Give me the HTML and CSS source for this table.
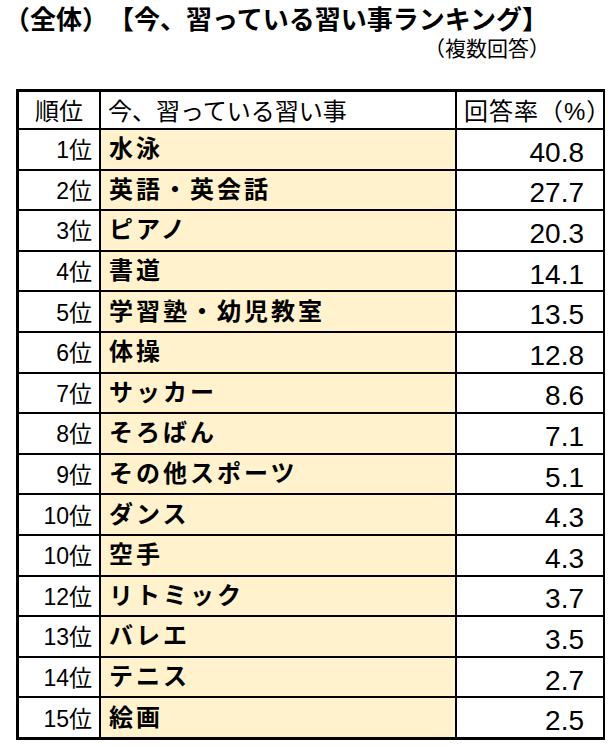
FILE: index.html
```html
<!DOCTYPE html>
<html lang="ja">
<head>
<meta charset="utf-8">
<title>今、習っている習い事ランキング</title>
<link rel="stylesheet" href="styles.css">
</head>
<body>
<div class="page">
  <h1 class="title">（全体）【今、習っている習い事ランキング】</h1>
  <div class="note">（複数回答）</div>
  <div class="table">
    <div class="hcell h-rank">順位</div>
    <div class="hcell h-name">今、習っている習い事</div>
    <div class="hcell h-rate">回答率（%）</div>

    <div class="cell rank">1位</div><div class="cell name">水泳</div><div class="cell rate">40.8</div>
    <div class="cell rank">2位</div><div class="cell name">英語・英会話</div><div class="cell rate">27.7</div>
    <div class="cell rank">3位</div><div class="cell name">ピアノ</div><div class="cell rate">20.3</div>
    <div class="cell rank">4位</div><div class="cell name">書道</div><div class="cell rate">14.1</div>
    <div class="cell rank">5位</div><div class="cell name">学習塾・幼児教室</div><div class="cell rate">13.5</div>
    <div class="cell rank">6位</div><div class="cell name">体操</div><div class="cell rate">12.8</div>
    <div class="cell rank">7位</div><div class="cell name">サッカー</div><div class="cell rate">8.6</div>
    <div class="cell rank">8位</div><div class="cell name">そろばん</div><div class="cell rate">7.1</div>
    <div class="cell rank">9位</div><div class="cell name">その他スポーツ</div><div class="cell rate">5.1</div>
    <div class="cell rank">10位</div><div class="cell name">ダンス</div><div class="cell rate">4.3</div>
    <div class="cell rank">10位</div><div class="cell name">空手</div><div class="cell rate">4.3</div>
    <div class="cell rank">12位</div><div class="cell name">リトミック</div><div class="cell rate">3.7</div>
    <div class="cell rank">13位</div><div class="cell name">バレエ</div><div class="cell rate">3.5</div>
    <div class="cell rank">14位</div><div class="cell name">テニス</div><div class="cell rate">2.7</div>
    <div class="cell rank">15位</div><div class="cell name">絵画</div><div class="cell rate">2.5</div>
  </div>
</div>
</body>
</html>
```

FILE: styles.css
```css
html, body {
  margin: 0;
  padding: 0;
  background: #ffffff;
}

body {
  font-family: "Liberation Sans", "Noto Sans CJK JP", sans-serif;
  color: #000000;
  text-spacing-trim: space-all;
}

.page {
  width: 605px;
  padding-top: 7px;
}

.title {
  margin: 0;
  padding-left: 4px;
  font-size: 26px;
  line-height: 26px;
  font-weight: bold;
  text-spacing-trim: space-all;
}

.note {
  margin-top: 5px;
  font-size: 21px;
  line-height: 21px;
  text-align: right;
  padding-right: 55px;
}

.table {
  margin: 30px 0 0 16px;
  display: grid;
  grid-template-columns: 80px 354px 146px;
  grid-template-rows: 36px repeat(15, 38.6px);
  gap: 2px;
  padding: 3px 2px 3px 3px;
  background: #000000;
  width: max-content;
}

.hcell,
.cell {
  background: #ffffff;
  display: flex;
  align-items: center;
  box-sizing: border-box;
  white-space: nowrap;
}

.hcell {
  font-size: 24px;
  line-height: 24px;
  font-weight: normal;
  padding-top: 3px;
}

.h-rank {
  justify-content: center;
}

.h-name {
  padding-left: 7px;
}

.h-rate {
  padding-left: 7px;
  letter-spacing: 1px;
}

.rank {
  justify-content: flex-end;
  padding-right: 7px;
  padding-top: 3px;
  font-size: 23px;
  line-height: 23px;
}

.name {
  background: #fff2cc;
  padding-left: 8px;
  font-size: 24px;
  line-height: 24px;
  font-weight: bold;
  letter-spacing: 3px;
}

.rate {
  justify-content: flex-end;
  padding-right: 19px;
  padding-top: 7px;
  font-size: 28px;
  line-height: 28px;
}
```
